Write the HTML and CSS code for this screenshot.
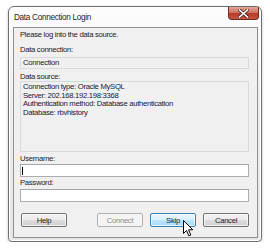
FILE: index.html
```html
<!DOCTYPE html>
<html lang="en">
<head>
  <meta charset="UTF-8" />
  <title>Data Connection Login</title>
  <link rel="stylesheet" href="styles.css">
</head>
<body>

<div class="window">
  <div class="titlebar">
    <span class="title">Data Connection Login</span>
    <button class="close-btn" aria-label="Close">
      <svg width="11" height="9" viewBox="0 0 11 9">
        <path d="M1.5 1 L9.5 8 M9.5 1 L1.5 8" stroke="#4a2a26" stroke-width="3.2" stroke-linecap="square"/>
        <path d="M1.5 1 L9.5 8 M9.5 1 L1.5 8" stroke="#ffffff" stroke-width="1.6" stroke-linecap="square"/>
      </svg>
    </button>
  </div>

  <div class="panel">
    <div class="intro">Please log into the data source.</div>

    <div class="label label-conn">Data connection:</div>
    <div class="readonly-box single">Connection</div>

    <div class="label label-source">Data source:</div>
    <div class="readonly-box multi">
      <div>Connection type: Oracle MySQL</div>
      <div>Server: 202.168.192.198:3368</div>
      <div>Authentication method: Database authentication</div>
      <div>Database: rbvhistory</div>
    </div>

    <div class="label label-user">Username:</div>
    <div class="text-input"><span class="caret"></span></div>

    <div class="label label-pass">Password:</div>
    <div class="text-input"></div>

    <div class="button-row">
      <button class="btn">Help</button>
      <div class="spacer"></div>
      <button class="btn" disabled>Connect</button>
      <button class="btn hover">Skip</button>
      <button class="btn">Cancel</button>
    </div>
  </div>

  <svg class="mouse" width="12" height="17" viewBox="0 0 12 17">
    <path d="M0.5 0.5 L0.5 13.5 L3.5 10.5 L5.8 15.8 L7.8 15 L5.6 9.8 L9.8 9.8 Z" fill="#ffffff" stroke="#000000" stroke-width="1" stroke-linejoin="miter"/>
  </svg>
</div>

</body>
</html>
```

FILE: styles.css
```css
* {
  box-sizing: border-box;
}
body {
  margin: 0;
  padding: 0;
  background: #ffffff;
  font-family: 'Liberation Sans', Arial, sans-serif;
  font-size: 7.7px;
  color: #1b1b1b;
}
.window {
  position: relative;
  margin: 6px 0 0 8px;
  width: 254px;
  height: 236px;
  border: 1px solid #6f6f6f;
  border-radius: 6px 6px 4px 4px;
  background: linear-gradient(to bottom, #fdfdfd, #eeeeee 40%, #e6e6e6);
  box-shadow: 0 1px 3px rgba(0, 0, 0, 0.25), inset 0 0 0 1px #ffffff;
  padding: 0 3px 3px 4px;
}
.titlebar {
  position: relative;
  height: 20px;
  display: flex;
  align-items: center;
}
.title {
  font-size: 8.2px;
  letter-spacing: -0.3px;
  color: #1e1e1e;
  padding-left: 1px;
  margin-top: 1px;
}
.close-btn {
  position: absolute;
  right: -1px;
  top: 0;
  width: 31px;
  height: 13px;
  padding: 0;
  border: 1px solid #6b2a22;
  border-top: none;
  border-radius: 0 0 4px 4px;
  background: linear-gradient(to bottom, #e3a394, #d07865 45%, #b8392a 55%, #c95440);
  display: flex;
  align-items: center;
  justify-content: center;
}
.panel {
  height: 211px;
  border: 1px solid #8f9193;
  background: #f0f0f0;
  padding: 0 8px 0 6px;
  display: flex;
  flex-direction: column;
}
.intro,
.label {
  line-height: 10px;
  height: 10px;
  letter-spacing: -0.3px;
  white-space: nowrap;
}
.intro {
  margin-top: 2px;
}
.label-conn {
  margin-top: 5px;
}
.label-source {
  margin-top: 3px;
  height: 9px;
  line-height: 9px;
}
.label-user {
  margin-top: 2px;
}
.label-pass {
  margin-top: 1px;
}
.readonly-box {
  border: 1px solid #dadada;
  background: #f0f0f0;
  padding: 0 2px;
  letter-spacing: -0.3px;
  white-space: nowrap;
}
.readonly-box.single {
  margin-top: 2px;
  height: 12px;
  line-height: 10px;
}
.readonly-box.multi {
  height: 71px;
  padding-top: 1px;
  line-height: 8.6px;
  color: #15183a;
}
.text-input {
  position: relative;
  height: 13px;
  border: 1px solid #abadb3;
  border-top-color: #a3a6ad;
  background: #ffffff;
}
.label-pass + .text-input {
  margin-top: 1px;
}
.caret {
  position: absolute;
  left: 1px;
  top: 2px;
  width: 1px;
  height: 8px;
  background: #000000;
}
.button-row {
  display: flex;
  gap: 7px;
  margin-top: 11px;
  padding-left: 1px;
}
.spacer {
  flex: 1;
}
.btn {
  width: 46px;
  height: 14px;
  padding: 0;
  font-family: inherit;
  font-size: 7.7px;
  letter-spacing: -0.3px;
  color: #1b1b1b;
  border: 1px solid #707070;
  border-radius: 2px;
  background: linear-gradient(to bottom, #f2f2f2, #ebebeb 50%, #dddddd 51%, #cfcfcf);
  box-shadow: inset 0 0 0 1px rgba(255, 255, 255, 0.7);
}
.btn:disabled {
  color: #8c8c8c;
  border-color: #adb2b5;
  background: #f4f4f4;
  box-shadow: none;
}
.btn.hover {
  border-color: #3c7fb1;
  background: linear-gradient(to bottom, #eaf6fd, #d9f0fc 50%, #bee6fd 51%, #a7d9f5);
}
.mouse {
  position: absolute;
  left: 174px;
  top: 213px;
}
```
